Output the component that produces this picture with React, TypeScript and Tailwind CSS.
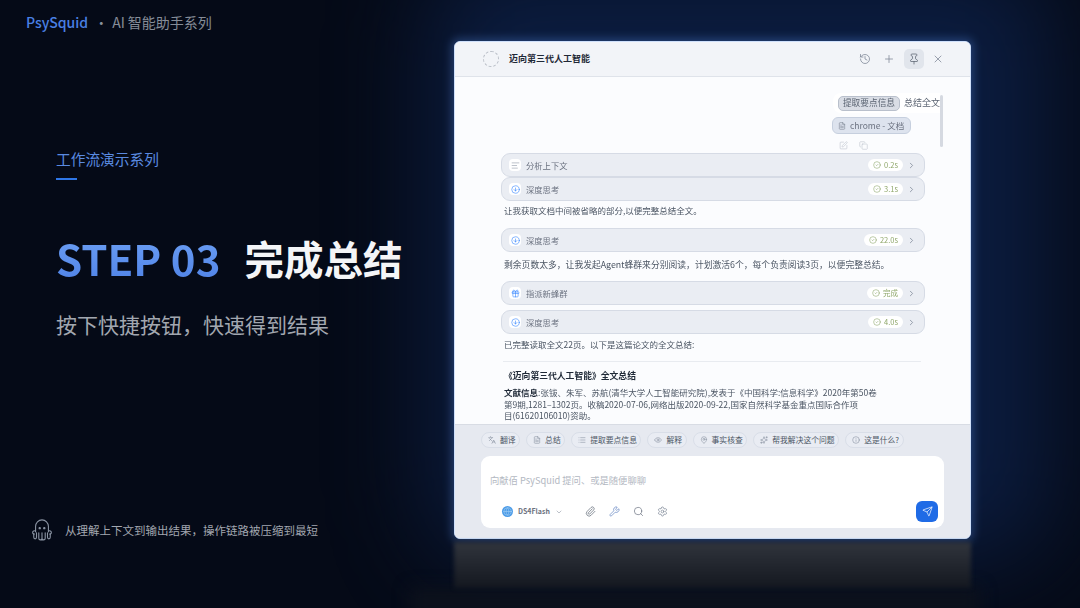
import React from 'react';
import {
  ChevronDown, ChevronRight, CircleCheck, Copy, Eye, FileText, Gift, Globe, History, Info, Languages, List, MapPin,
  Paperclip, Pin, Plus, Search, Send, Settings, Sparkles, SquarePen, Wrench, X, CircleArrowDown, AlignLeft,
} from 'lucide-react';

function StepCard({ icon: Icon, label, time, className = '', iconClass = 'text-blue-500' }: any) {
  return (
    <div className={`flex items-center h-6 rounded-[9px] border border-[#d6dbe5] bg-[#eaedf3] pl-[7px] pr-2 ${className}`}>
      <span className="flex h-3 w-3 items-center justify-center rounded bg-white">
        <Icon className={`h-[9px] w-[9px] ${iconClass}`} strokeWidth={1.5} />
      </span>
      <span className="ml-[5px] text-[8.3px] text-[#6b7280]">{label}</span>
      <span className="ml-auto flex h-3 items-center gap-[3px] rounded-full bg-white px-[5px] text-[7.5px] text-[#8fa76a]">
        <CircleCheck className="h-2 w-2 text-[#7e9a58]" strokeWidth={1.5} />
        {time}
      </span>
      <ChevronRight className="ml-1 h-[9px] w-[9px] text-[#7b8494]" strokeWidth={2} />
    </div>
  );
}

function QuickChip({ icon: Icon, label }: any) {
  return (
    <div className="flex h-4 items-center gap-1 rounded-full border border-[#d9dee8] bg-[#e9ecf3] pl-[6px] pr-[3.500px] text-[7.8px] text-[#4b5563]">
      <Icon className="h-2 w-2 text-[#7b8494]" strokeWidth={1.5} />
      <span>{label}</span>
    </div>
  );
}

function Octopus() {
  return (
    <svg viewBox="0 0 24 26" className="h-6 w-[22px] text-[#8b94a3]" fill="none" stroke="currentColor" strokeWidth="1.2" strokeLinecap="round">
      <path d="M5 15V9a7 7 0 0 1 14 0v6" />
      <circle cx="9.5" cy="11" r="0.7" fill="currentColor" />
      <circle cx="14.5" cy="11" r="0.7" fill="currentColor" />
      <path d="M5 14c-1.5-.6-3.2.2-3.2 1.8 0 1.3 1 1.8 1.8 1.6M19 14c1.5-.6 3.2.2 3.2 1.8 0 1.3-1 1.8-1.8 1.6" />
      <path d="M3 17v4c0 2.200 3 2.200 3 0v-5M21 17v4c0 2.200-3 2.200-3 0v-5" />
      <path d="M8.500 16v6c0 2.400 3.500 2.400 3.500 0 0 2.400 3.500 2.400 3.500 0v-6M12 16v6" />
    </svg>
  );
}

export default function App() {
  return (
    <div className="relative flex h-[608px] w-[1080px] overflow-hidden bg-[#050a17] font-['Noto_Sans_CJK_SC',sans-serif]">
      {/* background glow behind the window */}
      <div className="pointer-events-none absolute left-[430px] top-[-40px] h-[600px] w-[620px] rounded-[60px] bg-[#0e2450] opacity-70 blur-[50px]"></div>
      <div className="pointer-events-none absolute left-[451px] top-[38px] h-[504px] w-[523px] rounded-lg bg-[#5b8fe8] opacity-30 blur-[4px]"></div>
      <div className="pointer-events-none absolute bottom-[-8px] left-[410px] h-7 w-[570px] bg-[#0c111c] blur-[8px]"></div>

      {/* Left column */}
      <div className="relative z-10 flex w-[454px] shrink-0 flex-col">
        <div className="ml-[26px] mt-[13px] flex h-[19px] items-center text-[14px]">
          <span className="font-medium text-[#4a80e4]">PsySquid</span>
          <span className="ml-[6px] text-[#8a919d]">·</span>
          <span className="ml-1 text-[#868d98]">AI 智能助手系列</span>
        </div>

        <div className="ml-[56px] mt-[117px] text-[14.7px] leading-[20px] text-[#5a8ae0]">工作流演示系列</div>
        <div className="ml-[56px] mt-[9px] h-[2px] w-[21px] bg-[#2f76e6]"></div>

        <div className="ml-[56px] mt-[43px] flex h-[70px] items-center">
          <span className="bg-gradient-to-b from-[#6ea1f5] to-[#4f82e6] bg-clip-text text-[42px] font-bold leading-[52px] text-transparent">STEP 03</span>
          <span className="ml-[24px] text-[39.5px] font-bold leading-[52px] text-[#f4f5f7]">完成总结</span>
        </div>

        <div className="ml-[56px] mt-[16px] text-[21px] leading-[30px] text-[#a2a7b0]">按下快捷按钮，快速得到结果</div>

        <div className="ml-[31px] mt-[179px] flex items-center">
          <Octopus />
          <span className="ml-3 text-[11.500px] leading-4 text-[#a2a7b0]">从理解上下文到输出结果，操作链路被压缩到最短</span>
        </div>
      </div>

      {/* Right column */}
      <div className="relative z-10 flex flex-col pt-[41px]">
        <div className="relative flex h-[498px] w-[517px] flex-col overflow-hidden rounded-[6px] border border-[#cfe0fb] bg-[#fbfcfe] blur-[0.3px]">
          {/* title bar */}
          <div className="flex h-[35px] shrink-0 items-center border-b border-[#dfe3ea] bg-[#f2f4f8] pl-[28px] pr-[26px]">
            <span className="h-4 w-4 rounded-full border border-dashed border-[#b9bec7]"></span>
            <span className="ml-[10px] text-[9px] font-bold text-[#1f2937]">迈向第三代人工智能</span>
            <div className="ml-auto flex items-center text-[#7b8494]">
              <History className="h-3 w-3" strokeWidth={1.5} />
              <Plus className="ml-3 h-3 w-3" strokeWidth={1.5} />
              <span className="ml-[9px] flex h-5 w-5 items-center justify-center rounded-[5px] bg-[#e1e5ec]">
                <Pin className="h-3 w-3 text-[#5b6472]" strokeWidth={1.5} />
              </span>
              <X className="ml-2 h-3 w-3" strokeWidth={1.5} />
            </div>
          </div>

          {/* messages */}
          <div className="relative h-[347px] shrink-0 overflow-hidden">
            <div className="absolute right-[27px] top-[18px] h-[52px] w-[3px] rounded bg-[#d5d9e1]"></div>
            <div className="flex flex-col items-end pr-[30px] pt-[16px]">
              <div className="flex h-5 w-[107px] items-center rounded-l-[8px] bg-white pl-[5px] text-[#5b6472]">
                <span className="flex h-[15px] w-[62px] items-center justify-center rounded-[5px] border border-[#b9c0cc] bg-[#d9dde5] text-[8.7px] whitespace-nowrap">提取要点信息</span>
                <span className="ml-[4px] text-[9px] whitespace-nowrap">总结全文</span>
              </div>
            </div>
            <div className="ml-[377px] mt-[4px] flex h-[17px] w-[79px] items-center rounded-[6px] border border-[#c6cfde] bg-[#dde3ee] pl-[5px] text-[8.5px] text-[#6b7280]">
              <FileText className="h-2 w-2" strokeWidth={1.5} />
              <span className="ml-[4px]">chrome - 文档</span>
            </div>
            <div className="ml-[384px] mt-[6px] flex h-[10px] items-center gap-[11px] text-[#b9c0cc]">
              <SquarePen className="h-[9px] w-[9px]" strokeWidth={1.5} />
              <Copy className="h-[9px] w-[9px]" strokeWidth={1.5} />
            </div>

            <div className="ml-[46px] mt-[3px] w-[424px]">
              <StepCard icon={AlignLeft} label="分析上下文" time="0.2s" iconClass="text-[#8b94a3]" />
              <StepCard icon={CircleArrowDown} label="深度思考" time="3.1s" />
              <p className="ml-[3px] mt-[3px] h-[16px] text-[8.500px] leading-[12px] text-[#4b5563]">让我获取文档中间被省略的部分,以便完整总结全文。</p>
              <StepCard icon={CircleArrowDown} label="深度思考" time="22.0s" className="mt-[8px]" />
              <p className="ml-[3px] mt-[5px] h-[16px] text-[8.800px] leading-[16px] text-[#4b5563] whitespace-nowrap">剩余页数太多，让我发起Agent蜂群来分别阅读，计划激活6个，每个负责阅读3页，以便完整总结。</p>
              <StepCard icon={Gift} label="指派新蜂群" time="完成" className="mt-[8px]" />
              <StepCard icon={CircleArrowDown} label="深度思考" time="4.0s" className="mt-[5px]" />
              <p className="ml-[3px] mt-[2px] h-[16px] text-[8.500px] leading-[16px] text-[#4b5563]">已完整读取全文22页。以下是这篇论文的全文总结:</p>
              <div className="ml-[2px] mt-[9px] h-px w-[418px] bg-[#e8ebf0]"></div>
              <p className="ml-[3px] mt-[7px] h-[14px] text-[8.800px] font-bold leading-[14px] text-[#1f2937]">《迈向第三代人工智能》全文总结</p>
              <p className="ml-[3px] mt-[4px] text-[8.500px] leading-[11.500px] text-[#4b5563] whitespace-nowrap">
                <b className="text-[#1f2937]">文献信息</b>:张钹、朱军、苏航(清华大学人工智能研究院),发表于《中国科学:信息科学》2020年第50卷<br />
                第9期,1281–1302页。收稿2020-07-06,网络出版2020-09-22,国家自然科学基金重点国际合作项<br />
                目(61620106010)资助。
              </p>
            </div>
          </div>

          {/* composer */}
          <div className="flex min-h-0 flex-1 flex-col border-t border-[#d8dce4] bg-[#e6e9f0] px-[26px] pt-[7px]">
            <div className="flex gap-[6px]">
              <QuickChip icon={Languages} label="翻译" />
              <QuickChip icon={FileText} label="总结" />
              <QuickChip icon={List} label="提取要点信息" />
              <QuickChip icon={Eye} label="解释" />
              <QuickChip icon={MapPin} label="事实核查" />
              <QuickChip icon={Sparkles} label="帮我解决这个问题" />
              <QuickChip icon={Info} label="这是什么?" />
            </div>
            <div className="mt-2 h-[72px] w-[463px] rounded-[9px] bg-white pl-[9px] pr-[6px]">
              <div className="pt-[17px] text-[9.300px] leading-[14px] text-[#b3b8c2]">向献佰 PsySquid 提问、或是随便聊聊</div>
              <div className="mt-[14px] flex items-center">
                <span className="ml-3 flex h-[11px] w-[11px] items-center justify-center rounded-full bg-[#4b9be8]">
                  <Globe className="h-[9px] w-[9px] text-[#a9d2f5]" strokeWidth={1.5} />
                </span>
                <span className="ml-[5px] w-8 text-[7px] font-semibold text-[#6b7280]">DS4Flash</span>
                <ChevronDown className="ml-[5px] h-2 w-2 text-[#7b8494]" strokeWidth={1.5} />
                <Paperclip className="ml-[22px] h-[11px] w-[11px] text-[#5b6472]" strokeWidth={1.5} />
                <Wrench className="ml-[13px] h-[11px] w-[11px] text-[#5f82c0]" strokeWidth={1.5} />
                <Search className="ml-[13px] h-[11px] w-[11px] text-[#6b7280]" strokeWidth={1.5} />
                <Settings className="ml-[13px] h-[11px] w-[11px] text-[#7b8494]" strokeWidth={1.5} />
                <span className="ml-auto flex h-[21px] w-[22px] items-center justify-center rounded-[6px] bg-[#1f6be6]">
                  <Send className="h-[11px] w-[11px] text-white" strokeWidth={1.5} />
                </span>
              </div>
            </div>
          </div>
        </div>

        {/* reflection of the window */}
        <div className="mt-[3px] h-[46px] w-[517px] bg-gradient-to-b from-[#31353d] to-[#141820] blur-[2px]"></div>
      </div>
    </div>
  );
}
